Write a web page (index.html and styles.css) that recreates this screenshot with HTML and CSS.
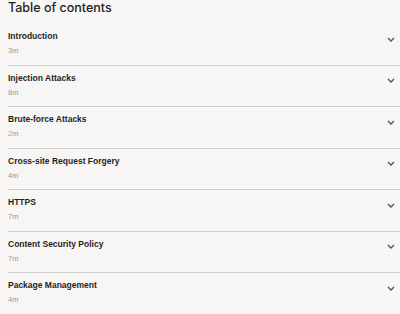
FILE: index.html
```html
<!DOCTYPE html>
<html lang="en">
<head>
  <meta charset="UTF-8">
  <meta name="viewport" content="width=device-width, initial-scale=1.0">
  <title>Table of contents</title>
  <link rel="stylesheet" href="styles.css">
</head>
<body>
  <div class="toc">
    <h2 class="toc-title">Table of contents</h2>
    <ul class="toc-list">
      <li class="toc-item">
        <div class="toc-text">
          <span class="toc-name">Introduction</span>
          <span class="toc-time">3m</span>
        </div>
        <svg class="toc-chevron" width="8" height="5" viewBox="0 0 8 5"><path d="M1 1l3 3 3-3" fill="none" stroke="#555" stroke-width="1.4"/></svg>
      </li>
      <li class="toc-item">
        <div class="toc-text">
          <span class="toc-name">Injection Attacks</span>
          <span class="toc-time">8m</span>
        </div>
        <svg class="toc-chevron" width="8" height="5" viewBox="0 0 8 5"><path d="M1 1l3 3 3-3" fill="none" stroke="#555" stroke-width="1.4"/></svg>
      </li>
      <li class="toc-item">
        <div class="toc-text">
          <span class="toc-name">Brute-force Attacks</span>
          <span class="toc-time">2m</span>
        </div>
        <svg class="toc-chevron" width="8" height="5" viewBox="0 0 8 5"><path d="M1 1l3 3 3-3" fill="none" stroke="#555" stroke-width="1.4"/></svg>
      </li>
      <li class="toc-item">
        <div class="toc-text">
          <span class="toc-name">Cross-site Request Forgery</span>
          <span class="toc-time">4m</span>
        </div>
        <svg class="toc-chevron" width="8" height="5" viewBox="0 0 8 5"><path d="M1 1l3 3 3-3" fill="none" stroke="#555" stroke-width="1.4"/></svg>
      </li>
      <li class="toc-item">
        <div class="toc-text">
          <span class="toc-name">HTTPS</span>
          <span class="toc-time">7m</span>
        </div>
        <svg class="toc-chevron" width="8" height="5" viewBox="0 0 8 5"><path d="M1 1l3 3 3-3" fill="none" stroke="#555" stroke-width="1.4"/></svg>
      </li>
      <li class="toc-item">
        <div class="toc-text">
          <span class="toc-name">Content Security Policy</span>
          <span class="toc-time">7m</span>
        </div>
        <svg class="toc-chevron" width="8" height="5" viewBox="0 0 8 5"><path d="M1 1l3 3 3-3" fill="none" stroke="#555" stroke-width="1.4"/></svg>
      </li>
      <li class="toc-item">
        <div class="toc-text">
          <span class="toc-name">Package Management</span>
          <span class="toc-time">4m</span>
        </div>
        <svg class="toc-chevron" width="8" height="5" viewBox="0 0 8 5"><path d="M1 1l3 3 3-3" fill="none" stroke="#555" stroke-width="1.4"/></svg>
      </li>
    </ul>
  </div>
</body>
</html>
```

FILE: styles.css
```css
body {
    margin: 0;
    padding: 0 0 0 8px;
    background-color: #f7f6f4;
    font-family: 'Liberation Sans', Arial, sans-serif;
    color: #222;
    overflow: hidden;
}
.toc-title {
    font-family: 'Inter', 'Liberation Sans', sans-serif;
    font-size: 12.5px;
    font-weight: 500;
    line-height: 16px;
    margin: 0 0 8px 0;
    color: #222;
}
.toc-list {
    list-style: none;
    margin: 0;
    padding: 0;
}
.toc-item {
    display: flex;
    justify-content: space-between;
    align-items: flex-start;
    padding: 6px 5px 8.5px 0;
    border-bottom: 1px solid #cfcdca;
}
.toc-text {
    display: flex;
    flex-direction: column;
    gap: 4px;
}
.toc-name {
    font-size: 8.5px;
    font-weight: bold;
    line-height: 12px;
    color: #1f1f1f;
}
.toc-time {
    font-size: 7.5px;
    line-height: 10px;
    color: #999;
}
.toc-chevron {
    margin-top: 6.5px;
}
```
